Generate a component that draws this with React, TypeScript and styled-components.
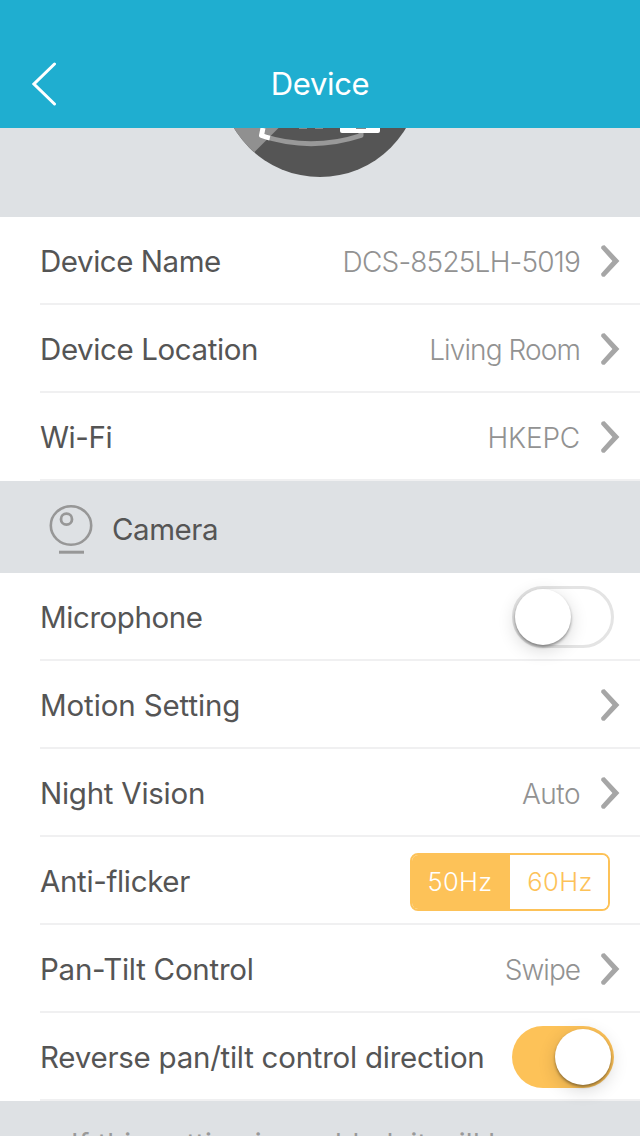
import React from "react";
import styled, { createGlobalStyle } from "styled-components";

const GlobalStyle = createGlobalStyle`
  * { box-sizing: border-box; }
  body { margin: 0; background: #dee1e4; }
`;

const Screen = styled.div`
  width: 640px;
  height: 1136px;
  overflow: hidden;
  display: flex;
  flex-direction: column;
  background: #dee1e4;
  color: #555;
  font-family: Inter, "Liberation Sans", sans-serif;
`;

const Header = styled.header`
  flex: none;
  height: 128px;
  padding: 40px 32px 0;
  display: grid;
  grid-template-columns: 60px 1fr 60px;
  align-items: center;
  background: #1faed0;
  color: #fff;
`;

const BackButton = styled.button`
  width: 26px;
  height: 44px;
  padding: 0;
  border: 0;
  background: none;
  svg { display: block; }
`;

const Title = styled.h1`
  margin: 0;
  text-align: center;
  font-size: 31px;
  line-height: 40px;
  font-weight: 400;
  letter-spacing: -0.35px;
`;

const Hero = styled.div`
  flex: none;
  height: 89px;
  svg { display: block; }
`;

const List = styled.ul`
  flex: none;
  list-style: none;
  margin: 0;
  padding: 0 0 0 40px;
  background: #fff;
`;

const Row = styled.li<{ $inset?: number }>`
  height: 88px;
  padding: 2px ${(p) => p.$inset ?? 20}px 0 0;
  display: flex;
  align-items: center;
  justify-content: space-between;
  border-bottom: 2px solid #f0f0f1;
`;

const Label = styled.span<{ $track?: number }>`
  font-size: 29.5px;
  line-height: 40px;
  font-weight: 400;
  white-space: nowrap;
  letter-spacing: ${(p) => p.$track ?? -0.2}px;
`;

const Trailing = styled.div`
  display: flex;
  align-items: center;
  gap: 20px;
`;

const Value = styled.span<{ $track?: number }>`
  padding-top: 2px;
  font-size: 28px;
  line-height: 40px;
  font-weight: 300;
  color: #929292;
  white-space: nowrap;
  letter-spacing: ${(p) => p.$track ?? 0}px;
`;

const SectionHeader = styled.div`
  flex: none;
  height: 92px;
  padding: 4px 0 0 48px;
  display: flex;
  align-items: center;
  gap: 18px;
  svg { margin-top: 1px; }
`;

const Toggle = styled.button<{ $on?: boolean }>`
  width: 102px;
  height: 62px;
  padding: ${(p) => (p.$on ? "0 3px" : "0")};
  display: flex;
  align-items: center;
  justify-content: ${(p) => (p.$on ? "flex-end" : "flex-start")};
  border: ${(p) => (p.$on ? "0" : "3px solid #e4e4e4")};
  border-radius: 31px;
  background: ${(p) => (p.$on ? "#fdc258" : "#fff")};
`;

const Knob = styled.span`
  width: 56px;
  height: 56px;
  border-radius: 50%;
  background: #fff;
  box-shadow: 0 2px 3px rgba(0, 0, 0, 0.38), 0 5px 18px rgba(0, 0, 0, 0.16);
`;

const Segments = styled.div`
  width: 200px;
  height: 58px;
  margin-top: 2px;
  display: flex;
  overflow: hidden;
  border: 2px solid #fdc258;
  border-radius: 8px;
`;

const Segment = styled.button<{ $active?: boolean }>`
  flex: none;
  width: 98px;
  padding: ${(p) => (p.$active ? "0 2px 0 0" : "0 0 0 2px")};
  border: 0;
  font: 300 25.5px/40px Inter, "Liberation Sans", sans-serif;
  letter-spacing: 0.4px;
  background: ${(p) => (p.$active ? "#fdc258" : "#fff")};
  color: ${(p) => (p.$active ? "#fff" : "#fdc258")};
`;

const Note = styled.p`
  flex: none;
  margin: 0;
  padding: 25px 0 0 71px;
  font-size: 28px;
  line-height: 36px;
  letter-spacing: 0.36px;
  color: #999;
  white-space: nowrap;
`;

const Chevron = () => (
  <svg width="20" height="34" viewBox="0 0 20 34" fill="none">
    <path d="M1.2 4.6Q0.6 1 4.6 1.2L19.4 17L4.6 32.8Q0.6 33 1.2 29.4L12.4 17Z" fill="#a6a6a6" />
  </svg>
);

const CameraIcon = () => (
  <svg width="46" height="52" viewBox="0 0 46 52" fill="none" stroke="#979797">
    <ellipse cx="23" cy="21.5" rx="20.2" ry="19.2" strokeWidth="2.6" />
    <circle cx="18.5" cy="15.2" r="5.5" strokeWidth="2.8" />
    <path d="M11 48.2H36" strokeWidth="3" />
  </svg>
);

const DeviceImage = () => (
  <svg width="640" height="89" viewBox="0 128 640 89">
    <defs>
      <clipPath id="disc"><circle cx="320" cy="77" r="100" /></clipPath>
    </defs>
    <circle cx="320" cy="77" r="100" fill="#555" />
    <path d="M263 126L261.5 135.5Q311 152 361 135.5V131" fill="none" stroke="#999" strokeWidth="5" strokeLinejoin="round" />
    <rect x="340" y="120" width="40" height="13" rx="2" fill="#fff" />
    <path d="M299 128.4h8M315 128.4h8M356 128.3h10" stroke="#888" strokeWidth="1.2" />
    <g clipPath="url(#disc)">
      <path d="M278.5 128L250 156.5H220V128Z" fill="#909090" />
      <path d="M263 128L261.5 135.5Q266 137.3 269.8 138.1" fill="none" stroke="#fff" strokeWidth="5" strokeLinejoin="round" />
    </g>
  </svg>
);

type Item = { label: string; track?: number; value?: string; valueTrack?: number };

const NavRow = ({ label, track, value, valueTrack }: Item) => (
  <Row>
    <Label $track={track}>{label}</Label>
    <Trailing>
      {value && <Value $track={valueTrack}>{value}</Value>}
      <Chevron />
    </Trailing>
  </Row>
);

export default function App() {
  return (
    <>
      <GlobalStyle />
      <Screen>
        <Header>
          <BackButton aria-label="Back">
            <svg width="26" height="44" viewBox="0 0 26 44" fill="none">
              <path d="M22.5 2L2 22L22.5 42" stroke="#fff" strokeWidth="3" strokeLinecap="round" />
            </svg>
          </BackButton>
          <Title>Device</Title>
        </Header>
        <Hero><DeviceImage /></Hero>
        <List>
          <NavRow label="Device Name" track={-0.45} value="DCS-8525LH-5019" valueTrack={-0.8} />
          <NavRow label="Device Location" track={-0.4} value="Living Room" valueTrack={-0.9} />
          <NavRow label="Wi-Fi" track={-0.45} value="HKEPC" valueTrack={-0.2} />
        </List>
        <SectionHeader>
          <CameraIcon />
          <Label $track={-0.45}>Camera</Label>
        </SectionHeader>
        <List>
          <Row $inset={26}>
            <Label $track={-0.42}>Microphone</Label>
            <Toggle aria-label="Microphone"><Knob /></Toggle>
          </Row>
          <NavRow label="Motion Setting" track={-0.12} />
          <NavRow label="Night Vision" track={-0.26} value="Auto" valueTrack={-0.5} />
          <Row $inset={30}>
            <Label $track={-0.34}>Anti-flicker</Label>
            <Segments>
              <Segment $active>50Hz</Segment>
              <Segment>60Hz</Segment>
            </Segments>
          </Row>
          <NavRow label="Pan-Tilt Control" track={-0.26} value="Swipe" valueTrack={-1} />
          <Row $inset={26}>
            <Label $track={-0.25}>Reverse pan/tilt control direction</Label>
            <Toggle $on aria-label="Reverse pan/tilt control direction"><Knob /></Toggle>
          </Row>
        </List>
        <Note>If this setting is enabled, it will be</Note>
      </Screen>
    </>
  );
}
